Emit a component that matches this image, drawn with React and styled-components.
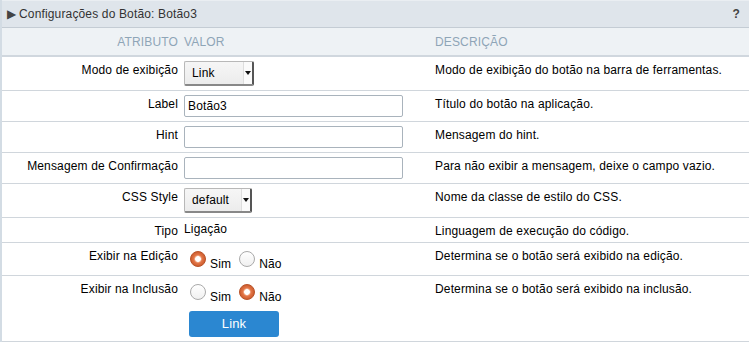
import React from "react";
import styled, { createGlobalStyle } from "styled-components";

const GlobalStyle = createGlobalStyle`
  body {
    margin: 0;
    background: #fff;
    font-family: "Liberation Sans", Arial, sans-serif;
    font-size: 12px;
    letter-spacing: 0.15px;
    color: #000;
  }
`;

const ROWS = [
  { label: "Modo de exibição", kind: "select", value: "Link", width: 70, desc: "Modo de exibição do botão na barra de ferramentas." },
  { label: "Label", kind: "input", value: "Botão3", desc: "Título do botão na aplicação." },
  { label: "Hint", kind: "input", value: "", desc: "Mensagem do hint." },
  { label: "Mensagem de Confirmação", kind: "input", value: "", desc: "Para não exibir a mensagem, deixe o campo vazio." },
  { label: "CSS Style", kind: "select", value: "default", width: 68, desc: "Nome da classe de estilo do CSS." },
  { label: "Tipo", kind: "text", value: "Ligação", desc: "Linguagem de execução do código." },
  { label: "Exibir na Edição", kind: "radio", value: "Sim", desc: "Determina se o botão será exibido na edição." },
  { label: "Exibir na Inclusão", kind: "radio", value: "Não", button: "Link", desc: "Determina se o botão será exibido na inclusão." },
];

const Radio = ({ checked, label }) => (
  <RadioItem>
    <RadioDot checked={checked} />
    <span>{label}</span>
  </RadioItem>
);

const Value = ({ row }) => {
  if (row.kind === "select")
    return (
      <Select style={{ width: row.width }}>
        <span>{row.value}</span>
        <Arrow />
      </Select>
    );
  if (row.kind === "input") return <Input>{row.value}</Input>;
  if (row.kind === "text") return <Plain>{row.value}</Plain>;
  return (
    <>
      <RadioGroup>
        <Radio checked={row.value === "Sim"} label="Sim" />
        <Radio checked={row.value === "Não"} label="Não" />
      </RadioGroup>
      {row.button && <LinkButton>{row.button}</LinkButton>}
    </>
  );
};

export default () => (
  <>
    <GlobalStyle />
    <Panel>
      <TitleBar>
        <Title>
          <Caret>▶</Caret>
          Configurações do Botão: Botão3
        </Title>
        <Help>?</Help>
      </TitleBar>
      <Table>
        <colgroup>
          <col style={{ width: 179 }} />
          <col style={{ width: 251 }} />
          <col />
        </colgroup>
        <thead>
          <tr>
            <HeadCell align="right">ATRIBUTO</HeadCell>
            <HeadCell>VALOR</HeadCell>
            <HeadCell>DESCRIÇÃO</HeadCell>
          </tr>
        </thead>
        <tbody>
          {ROWS.map((row) => (
            <Row key={row.label}>
              <LabelCell>{row.label}</LabelCell>
              <ValueCell>
                <Value row={row} />
              </ValueCell>
              <DescCell>{row.desc}</DescCell>
            </Row>
          ))}
        </tbody>
      </Table>
    </Panel>
  </>
);

const Panel = styled.div`
  border-left: 2px solid #d3dce4;
  width: 747px;
`;
const TitleBar = styled.div`
  display: flex;
  align-items: center;
  justify-content: space-between;
  height: 26px;
  padding: 0 9px 0 5px;
  background: #dfe5eb;
  border-top: 1px solid #eaeef2;
  border-bottom: 1px solid #c4ccd4;
  color: #333;
`;
const Title = styled.div`
  display: flex;
  align-items: center;
`;
const Caret = styled.span`
  font-size: 12px;
  color: #444;
  width: 12px;
`;
const Help = styled.span`
  font-weight: bold;
  color: #444;
`;
const Table = styled.table`
  width: 100%;
  border-collapse: collapse;
  table-layout: fixed;
`;
const HeadCell = styled.th`
  height: 27px;
  padding: 0 3px;
  text-align: ${(p) => p.align || "left"};
  font-weight: normal;
  color: #8ea5b7;
  background: #eef2f5;
  border-bottom: 2px solid #d0d7de;
  line-height: 14px;
`;
const Row = styled.tr`
  border-bottom: 1px solid #d0d6dc;
`;
const Cell = styled.td`
  vertical-align: top;
  line-height: 14px;
  padding: 4px 3px;
`;
const LabelCell = styled(Cell)`
  text-align: right;
  padding-top: 6px;
`;
const ValueCell = styled(Cell)``;
const DescCell = styled(Cell)`
  padding-top: 6px;
`;
const Plain = styled.div``;
const Select = styled.div`
  display: flex;
  align-items: center;
  justify-content: space-between;
  box-sizing: border-box;
  height: 25px;
  padding-left: 7px;
  background: linear-gradient(#f6f6f6, #ececec);
  border: 1px solid #b8b8b8;
  border-right: 2px solid #555;
  border-bottom: 2px solid #888;
  border-radius: 2px;
  font-size: 12px;
`;
const Arrow = styled.span`
  display: flex;
  align-items: center;
  justify-content: center;
  width: 8px;
  height: 100%;
  background: #fafafa;
  border-left: 1px solid #ddd;
  &::after {
    content: "";
    border-left: 3px solid transparent;
    border-right: 3px solid transparent;
    border-top: 4px solid #111;
  }
`;
const Input = styled.div`
  box-sizing: border-box;
  width: 219px;
  height: 22px;
  padding: 4px 3px;
  border: 1px solid #a9b3bc;
  border-radius: 2px;
  line-height: 13px;
  background: #fff;
`;
const RadioGroup = styled.div`
  display: flex;
  align-items: flex-end;
  height: 24px;
  padding-left: 6px;
  gap: 8px;
`;
const RadioItem = styled.label`
  display: flex;
  align-items: flex-end;
  gap: 4px;
`;
const RadioDot = styled.span`
  box-sizing: border-box;
  width: 16px;
  height: 16px;
  margin-bottom: 4px;
  border-radius: 50%;
  border: 1px solid ${(p) => (p.checked ? "#b9542a" : "#aaa")};
  background: ${(p) =>
    p.checked
      ? "radial-gradient(circle, #fff 0 2.5px, #f6c6ac 3px, #e4784a 4px, #cf5e2f 7px)"
      : "linear-gradient(#fff, #f0f0f0)"};
`;
const LinkButton = styled.div`
  display: flex;
  align-items: center;
  justify-content: center;
  width: 90px;
  height: 26px;
  margin: 7px 0 0 5px;
  border-radius: 3px;
  background: #2b87d1;
  color: #fff;
  font-size: 13px;
`;
